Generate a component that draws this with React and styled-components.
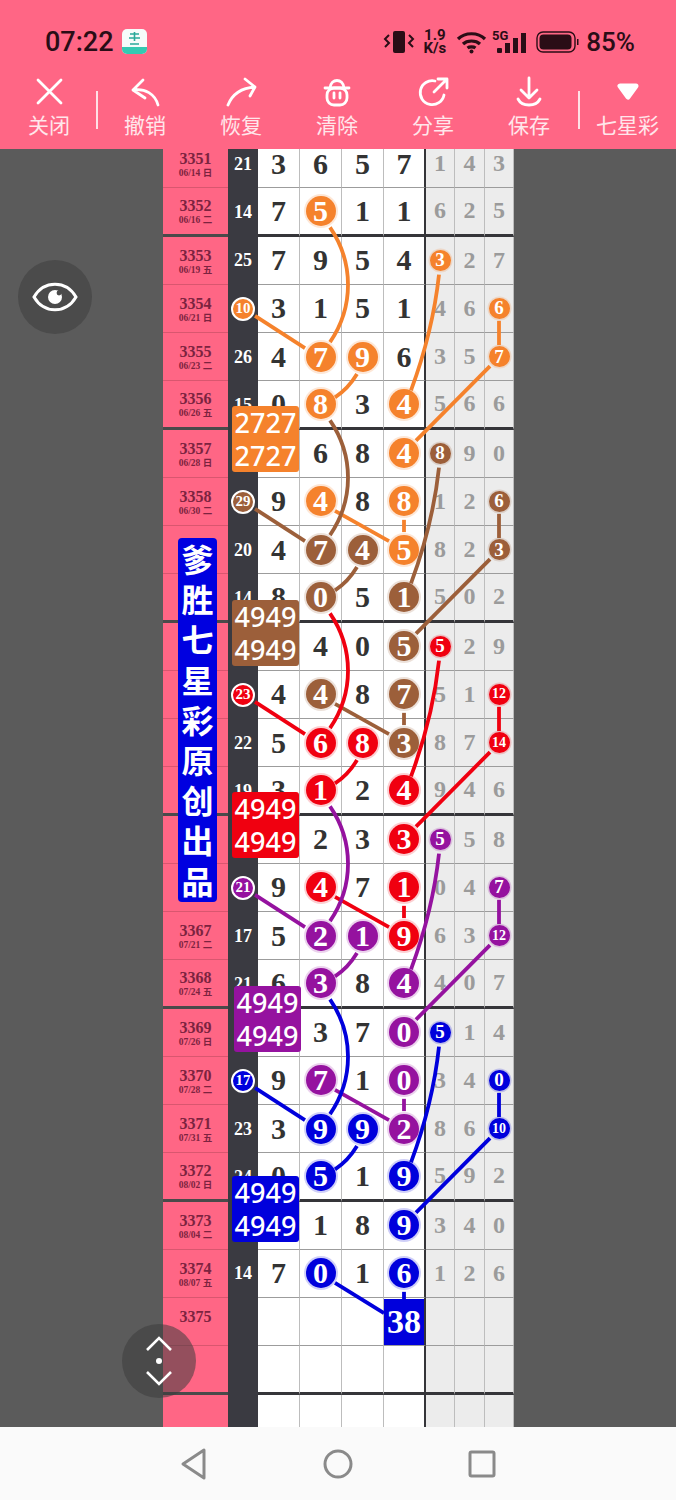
import React from 'react'
import styled, { createGlobalStyle } from 'styled-components'

const COLORS = {
  o: '#f5822c',
  b: '#9c5f3a',
  r: '#f00010',
  p: '#95129f',
  u: '#0000dc',
}

const ROW_H = 48.25
const CX = { seat: 80, c0: 115, c1: 157, c2: 199, c3: 241, g0: 277, g1: 307, g2: 336 }
const rowY = (i) => 24.1 + ROW_H * i

// number, date, sum, four main digits, three side digits
// letter after a digit = ball colour, x = filled box
// labels of 3359-3366 sit under the blue banner so they are left empty
const ROWS = [
  ['3351', '06/14 日', '21', '3 6 5 7', '1 4 3'],
  ['3352', '06/16 二', '14', '7 5o 1 1', '6 2 5'],
  ['3353', '06/19 五', '25', '7 9 5 4', '3o 2 7'],
  ['3354', '06/21 日', '10o', '3 1 5 1', '4 6 6o'],
  ['3355', '06/23 二', '26', '4 7o 9o 6', '3 5 7o'],
  ['3356', '06/26 五', '15', '0 8o 3 4o', '5 6 6'],
  ['3357', '06/28 日', '', '- 6 8 4o', '8b 9 0'],
  ['3358', '06/30 二', '29b', '9 4o 8 8o', '1 2 6b'],
  ['', '', '20', '4 7b 4b 5o', '8 2 3b'],
  ['', '', '14', '8 0b 5 1b', '5 0 2'],
  ['', '', '', '- 4 0 5b', '5r 2 9'],
  ['', '', '23r', '4 4b 8 7b', '5 1 12r'],
  ['', '', '22', '5 6r 8r 3b', '8 7 14r'],
  ['', '', '19', '3 1r 2 4r', '9 4 6'],
  ['', '', '', '- 2 3 3r', '5p 5 8'],
  ['', '', '21p', '9 4r 7 1r', '0 4 7p'],
  ['3367', '07/21 二', '17', '5 2p 1p 9r', '6 3 12p'],
  ['3368', '07/24 五', '21', '6 3p 8 4p', '4 0 7'],
  ['3369', '07/26 日', '', '- 3 7 0p', '5u 1 4'],
  ['3370', '07/28 二', '17u', '9 7p 1 0p', '3 4 0u'],
  ['3371', '07/31 五', '23', '3 9u 9u 2p', '8 6 10u'],
  ['3372', '08/02 日', '24', '0 5u 1 9u', '5 9 2'],
  ['3373', '08/04 二', '', '- 1 8 9u', '3 4 0'],
  ['3374', '08/07 五', '14', '7 0u 1 6u', '1 2 6'],
  ['3375', '', '', '- - - 38x', '- - -'],
  ['', '', '', '- - - -', '- - -'],
  ['', '', '', '- - - -', '- - -'],
]

const GROUPS = [
  { k: 1, c: COLORS.o },
  { k: 5, c: COLORS.b },
  { k: 9, c: COLORS.r },
  { k: 13, c: COLORS.p },
  { k: 17, c: COLORS.u },
]

const TOOLS = [
  { label: '关闭', icon: 'close' },
  { label: '撤销', icon: 'undo', divider: 0 },
  { label: '恢复', icon: 'redo' },
  { label: '清除', icon: 'trash' },
  { label: '分享', icon: 'share' },
  { label: '保存', icon: 'save' },
  { label: '七星彩', icon: 'heart', divider: 2, last: true },
]

const BADGES = [
  { text: '2727', c: COLORS.o, left: 69, top: 266 },
  { text: '4949', c: COLORS.b, left: 69, top: 460 },
  { text: '4949', c: COLORS.r, left: 69, top: 652 },
  { text: '4949', c: COLORS.p, left: 71, top: 846 },
  { text: '4949', c: COLORS.u, left: 69, top: 1036 },
]

const GlobalStyle = createGlobalStyle`
  html, body {
    margin: 0;
    padding: 0;
    background: #5b5b5b;
  }
`

const Page = styled.div`
  position: relative;
  width: 676px;
  height: 1500px;
  display: flex;
  flex-direction: column;
  overflow: hidden;
  background: #5b5b5b;
  font-family: 'Liberation Serif', 'Noto Sans CJK SC', serif;
`

const Header = styled.header`
  flex: 0 0 149px;
  background: #ff6685;
  display: flex;
  flex-direction: column;
`

const StatusBar = styled.div`
  height: 76px;
  padding: 7px 41px 0 45px;
  box-sizing: border-box;
  display: flex;
  align-items: center;
  color: #2a0d16;
  font-family: Roboto, sans-serif;
`

const Clock = styled.span`
  font-size: 27px;
  font-weight: 500;
  margin-right: 7px;
`

const StatusRight = styled.div`
  margin-left: auto;
  display: flex;
  align-items: center;
`

const Speed = styled.span`
  font-size: 15px;
  font-weight: 700;
  line-height: 13px;
  text-align: center;
  margin: 0 10px 0 5px;
`

const Gap = styled.span`
  width: ${({ $w }) => $w}px;
`

const Percent = styled.span`
  font-size: 26px;
  font-weight: 500;
  margin-left: 7px;
`

const Toolbar = styled.div`
  display: flex;
  align-items: flex-start;
  padding-left: 1px;
`

const Tool = styled.div`
  flex: ${({ $last }) => ($last ? '1' : '0 0 96px')};
  display: flex;
  flex-direction: column;
  align-items: center;
  color: #ffe6eb;
  padding-left: ${({ $last }) => ($last ? '2px' : '0')};
`

const ToolLabel = styled.span`
  font-family: 'Noto Sans CJK SC', sans-serif;
  font-size: 21px;
  line-height: 30px;
  margin-top: 1px;
`

const ToolDivider = styled.div`
  width: 2px;
  height: 38px;
  margin: 15px ${({ $shift }) => -1 - $shift}px 0 ${({ $shift }) => $shift - 1}px;
  background: #ffe0e6;
`

const Main = styled.main`
  flex: 1;
  overflow: hidden;
  padding-left: 163px;
`

const Board = styled.div`
  position: relative;
  width: 351px;
  margin-top: -9px;
  display: flex;
  flex-direction: column;
`

const Row = styled.div`
  display: grid;
  grid-template-columns: 65px 30px 42px 42px 42px 42px 29px 30px 29px;
  height: ${ROW_H}px;
`

const Cell = styled.div`
  box-sizing: border-box;
  display: flex;
  align-items: center;
  justify-content: center;
  border-bottom: ${({ $thick }) => ($thick ? '3px solid #353539' : '1px solid #9c9c9c')};
`

const Label = styled(Cell)`
  flex-direction: column;
  padding-top: 2px;
  background: #ff6685;
  color: #7c2340;
  border-bottom-color: ${({ $thick }) => ($thick ? '#4a4a4a' : '#d9566f')};
`

const Issue = styled.span`
  font-size: 16px;
  font-weight: 700;
  line-height: 17px;
`

const DateText = styled.span`
  font-size: 9.5px;
  font-weight: 700;
  line-height: 12px;
  min-height: 12px;
`

const Sum = styled(Cell)`
  background: #3a3a41;
  color: #fff;
  font-size: 18px;
  font-weight: 700;
  border-bottom: none;
`

const Digit = styled(Cell)`
  background: #fff;
  color: #333;
  font-size: 30px;
  font-weight: 700;
  border-right: ${({ $edge }) => ($edge ? '2px solid #353539' : '1px solid #bdbdbd')};
`

const SideDigit = styled(Cell)`
  background: #ececec;
  color: #9b9b9b;
  font-size: 24px;
  font-weight: 700;
  border-right: 1px solid #bdbdbd;
`

const Ball = styled.span`
  width: 30px;
  height: 30px;
  flex: none;
  border-radius: 50%;
  display: flex;
  align-items: center;
  justify-content: center;
  color: #fff;
  background: ${({ $c }) => $c};
  box-shadow: 0 0 0 2px ${({ $c }) => $c}30;
`

const SmallBall = styled(Ball)`
  width: 21px;
  height: 21px;
  font-size: ${({ $wide }) => ($wide ? '14px' : '19px')};
  box-shadow: 0 0 0 1.5px ${({ $c }) => $c}30;
`

const SeatBall = styled(Ball)`
  width: 20px;
  height: 20px;
  font-size: 15px;
  border: 2px solid #fff;
  box-shadow: none;
`

const FillBox = styled.span`
  align-self: stretch;
  width: 40px;
  margin: 1px 0 0 0;
  display: flex;
  align-items: center;
  justify-content: center;
  color: #fff;
  font-size: 34px;
  background: ${({ $c }) => $c};
`

const Lines = styled.svg`
  position: absolute;
  left: 0;
  top: 0;
  z-index: 1;
  pointer-events: none;
`

const Badge = styled.div`
  position: absolute;
  z-index: 2;
  left: ${({ $left }) => $left}px;
  top: ${({ $top }) => $top}px;
  width: 67px;
  height: 66px;
  border-radius: 3px;
  background: ${({ $c }) => $c};
  color: #fff;
  font-family: 'Noto Sans', sans-serif;
  font-size: 27px;
  font-weight: 500;
  line-height: 33px;
  text-align: center;
`

const Banner = styled.div`
  position: absolute;
  z-index: 2;
  left: 15px;
  top: 398px;
  width: 39px;
  height: 364px;
  border-radius: 4px;
  background: #0000e0;
  color: #fff;
  font-family: 'Noto Sans CJK SC', sans-serif;
  font-size: 32px;
  font-weight: 700;
  line-height: 40.2px;
  text-align: center;
`

const RoundButton = styled.div`
  position: absolute;
  z-index: 3;
  left: ${({ $left }) => $left}px;
  top: ${({ $top }) => $top}px;
  width: 74px;
  height: 74px;
  border-radius: 50%;
  display: flex;
  align-items: center;
  justify-content: center;
  background: ${({ $bg }) => $bg};
`

const NavBar = styled.nav`
  flex: 0 0 73px;
  background: #fafafa;
  display: flex;
  justify-content: center;
  align-items: center;
`

const NavSlot = styled.div`
  width: 144px;
  display: flex;
  justify-content: center;
`

const ToolIcon = ({ name }) => {
  const strokes = {
    close: <path d="M5 4 L28 27 M28 4 L5 27" />,
    undo: <path d="M14 4 L4 14 L16 22 M4 14 C16 12 26 18 29 29" />,
    redo: <path d="M20 3 L30 11 L25 20 M30 11 C16 12 7 19 3 29" />,
    trash: (
      <>
        <path d="M4 12 H28 M9 12 C10 2 22 2 23 12 M13 17 V22 M19 17 V22" />
        <rect x="6" y="12" width="20" height="17" rx="7" />
      </>
    ),
    share: <path d="M18 5 A12 12 0 1 0 27 19 M17 16 L30 3 M21 3 H30 V12" />,
    save: <path d="M16 2 V21 M8 14 L16 22 L24 14 M5 23 C9 31 23 31 27 23" />,
    heart: <path d="M8 10 H24 L16 21 Z" fill="#fff" strokeWidth="5" />,
  }
  return (
    <svg width="32" height="32" viewBox="0 0 32 32" fill="none" stroke="#fff" strokeWidth="2.8" strokeLinecap="round" strokeLinejoin="round">
      {strokes[name]}
    </svg>
  )
}

const Vibrate = () => (
  <svg width="38" height="26" viewBox="0 0 38 26">
    <rect x="13" y="2" width="12" height="22" rx="2" fill="#2a0d16" />
    <path d="M9 6 L5 10 L9 14 L5 18 M29 6 L33 10 L29 14 L33 18" fill="none" stroke="#2a0d16" strokeWidth="2" />
  </svg>
)

const Wifi = () => (
  <svg width="31" height="24" viewBox="0 0 31 24" fill="none" stroke="#2a0d16" strokeWidth="3.2">
    <path d="M2 9 C9 2 22 2 29 9 M7 14 C11 10 20 10 24 14 M11.5 18 C13.5 16.5 17.5 16.5 19.5 18" />
    <circle cx="15.5" cy="21.5" r="2" fill="#2a0d16" stroke="none" />
  </svg>
)

const Signal = () => (
  <svg width="35" height="24" viewBox="0 0 35 24" fill="#2a0d16">
    <text x="0" y="10" fontFamily="Roboto, sans-serif" fontSize="13" fontWeight="700">5G</text>
    <rect x="5" y="18" width="5" height="5" rx="1" />
    <rect x="13" y="13" width="5" height="10" />
    <rect x="21" y="8" width="5" height="15" />
    <rect x="29" y="3" width="5" height="20" />
  </svg>
)

const Battery = () => (
  <svg width="43" height="24" viewBox="0 0 43 24">
    <rect x="1" y="2" width="38" height="20" rx="6" fill="none" stroke="#2a0d16" strokeWidth="1.4" />
    <rect x="3.5" y="4.5" width="32" height="15" rx="4" fill="#2a0d16" />
    <rect x="41" y="9" width="1.5" height="6" fill="#2a0d16" />
  </svg>
)

const AppIcon = () => (
  <svg width="27" height="27" viewBox="0 0 27 27">
    <rect x="1" y="1" width="25" height="25" rx="5" fill="#f6fbfa" />
    <path d="M1 19 H26 V21 A5 5 0 0 1 21 26 H6 A5 5 0 0 1 1 21 Z" fill="#35c9b2" />
    <path d="M9 6 H18 M13.5 4 V13 M8 10 H19 M9 16 H18" stroke="#2aa99a" strokeWidth="1.6" fill="none" />
  </svg>
)

const ChartLines = () => (
  <Lines width="351" height="1300" fill="none" strokeWidth="3.8" strokeLinecap="butt">
    {GROUPS.map(({ k, c }) => {
      const y = (n) => rowY(k + n)
      const isLast = k === 17
      return (
        <g key={k} stroke={c}>
          <path d={`M${CX.c1 + 10} ${y(0) + 15} C${CX.c1 + 34} ${y(0) + 50} ${CX.c1 + 34} ${y(3) - 50} ${CX.c1 + 10} ${y(3) - 15}`} />
          <path d={`M${CX.seat + 12} ${y(2) + 7} L${CX.c1 - 15} ${y(3) - 9}`} />
          <path d={`M${CX.c2 - 5} ${y(3) + 17} Q${CX.c2 - 14} ${y(3) + 32} ${CX.c1 + 15} ${y(4) - 8}`} />
          <path d={`M${CX.g0 - 1} ${y(1) + 14} C${CX.g0 - 6} ${y(1) + 60} ${CX.g0 - 16} ${y(4) - 50} ${CX.c3 + 7} ${y(4) - 15}`} />
          <path d={`M${CX.g2} ${y(2) + 12} V${y(3) - 12}`} />
          <path d={`M${CX.g2 - 9} ${y(3) + 9} L${CX.c3 + 12} ${y(5) - 13}`} />
          <path d={`M${CX.c1 + 15} ${y(6) + 9} L${isLast ? CX.c3 - 20 : CX.c3 - 15} ${y(7) - 9}`} />
          <path d={`M${CX.c3} ${y(6) + 18} V${y(7) - 18}`} />
        </g>
      )
    })}
  </Lines>
)

const parse = (raw) => {
  const m = raw.match(/^(\d+)([obrpux])?$/)
  return m ? { text: m[1], mark: m[2] } : { text: '' }
}

const MainDigit = ({ raw, edge, thick }) => {
  const { text, mark } = parse(raw)
  if (mark === 'x') {
    return (
      <Digit $edge={edge} $thick={thick}>
        <FillBox $c={COLORS.u}>{text}</FillBox>
      </Digit>
    )
  }
  return (
    <Digit $edge={edge} $thick={thick}>
      {mark ? <Ball $c={COLORS[mark]}>{text}</Ball> : text}
    </Digit>
  )
}

const TableRow = ({ row, index }) => {
  const [issue, date, sum, main, side] = row
  const thick = index % 4 === 1
  const seat = parse(sum)
  return (
    <Row>
      <Label $thick={thick}>
        <Issue>{issue}</Issue>
        <DateText>{date}</DateText>
      </Label>
      <Sum>{seat.mark ? <SeatBall $c={COLORS[seat.mark]}>{seat.text}</SeatBall> : seat.text}</Sum>
      {main.split(' ').map((raw, i) => (
        <MainDigit key={i} raw={raw} edge={i === 3} thick={thick} />
      ))}
      {side.split(' ').map((raw, i) => {
        const { text, mark } = parse(raw)
        return (
          <SideDigit key={i} $thick={thick}>
            {mark ? <SmallBall $c={COLORS[mark]} $wide={text.length > 1}>{text}</SmallBall> : text}
          </SideDigit>
        )
      })}
    </Row>
  )
}

export default function App() {
  return (
    <Page>
      <GlobalStyle />
      <Header>
        <StatusBar>
          <Clock>07:22</Clock>
          <AppIcon />
          <StatusRight>
            <Vibrate />
            <Speed>1.9<br />K/s</Speed>
            <Wifi />
            <Gap $w={5} />
            <Signal />
            <Gap $w={9} />
            <Battery />
            <Percent>85%</Percent>
          </StatusRight>
        </StatusBar>
        <Toolbar>
          {TOOLS.map((t) => (
            <React.Fragment key={t.label}>
              {t.divider !== undefined && <ToolDivider $shift={t.divider} />}
              <Tool $last={t.last}>
                <ToolIcon name={t.icon} />
                <ToolLabel>{t.label}</ToolLabel>
              </Tool>
            </React.Fragment>
          ))}
        </Toolbar>
      </Header>

      <Main>
        <Board>
          {ROWS.map((row, i) => (
            <TableRow key={i} row={row} index={i} />
          ))}
          <ChartLines />
          <Banner>爹胜七星彩原创出品</Banner>
          {BADGES.map((b) => (
            <Badge key={b.top} $c={b.c} $left={b.left} $top={b.top}>
              {b.text}
              <br />
              {b.text}
            </Badge>
          ))}
        </Board>
      </Main>

      <RoundButton $left={18} $top={260} $bg="#4b4b4b">
        <svg width="46" height="32" viewBox="0 0 46 32" fill="none" stroke="#fff" strokeWidth="3">
          <path d="M2 16 C12 -1 34 -1 44 16 C34 33 12 33 2 16 Z" />
          <circle cx="23" cy="16" r="7" fill="#fff" stroke="none" />
          <circle cx="27" cy="12" r="2.4" fill="#4b4b4b" stroke="none" />
        </svg>
      </RoundButton>

      <RoundButton $left={122} $top={1324} $bg="rgba(60,60,60,0.55)">
        <svg width="30" height="50" viewBox="0 0 30 50" fill="none" stroke="#fff" strokeWidth="2.6">
          <path d="M3 14 L15 2 L27 14 M3 36 L15 48 L27 36" />
          <circle cx="15" cy="25" r="3" fill="#fff" stroke="none" />
        </svg>
      </RoundButton>

      <NavBar>
        <NavSlot>
          <svg width="26" height="32" viewBox="0 0 26 32" fill="none" stroke="#8a8a8a" strokeWidth="3" strokeLinejoin="round">
            <path d="M23 2 V30 L2 16 Z" />
          </svg>
        </NavSlot>
        <NavSlot>
          <svg width="30" height="30" viewBox="0 0 30 30" fill="none" stroke="#8a8a8a" strokeWidth="3">
            <circle cx="15" cy="15" r="13" />
          </svg>
        </NavSlot>
        <NavSlot>
          <svg width="28" height="28" viewBox="0 0 28 28" fill="none" stroke="#8a8a8a" strokeWidth="3" strokeLinejoin="round">
            <rect x="2" y="2" width="24" height="24" rx="1.5" />
          </svg>
        </NavSlot>
      </NavBar>
    </Page>
  )
}
